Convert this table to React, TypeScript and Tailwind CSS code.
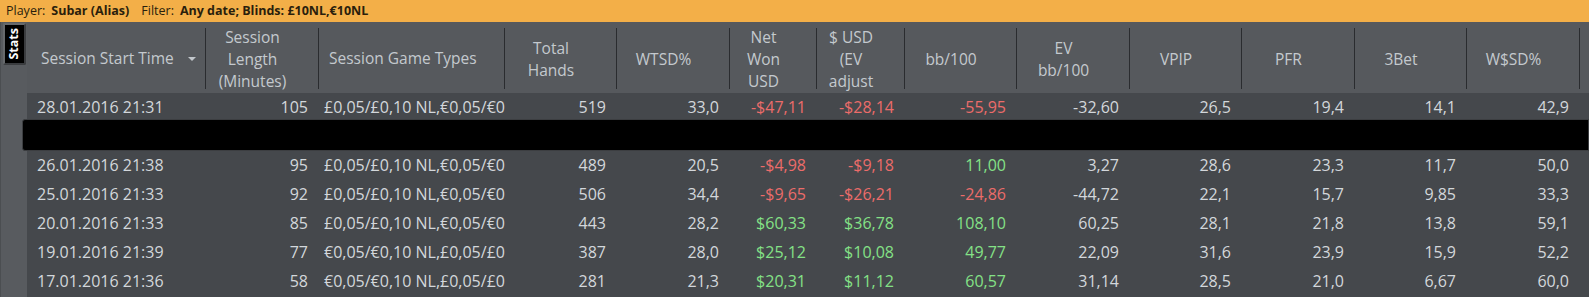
const cols = [179, 113, 186, 112, 113, 87, 88, 112, 113, 112, 113, 112, 113];
const grid = "grid grid-cols-[179px_113px_186px_112px_113px_87px_88px_112px_113px_112px_113px_112px_113px_1fr]";

const headers: string[][] = [
  ["Session Start Time"],
  ["Session", "Length", "(Minutes)"],
  ["Session Game Types"],
  ["Total", "Hands"],
  ["WTSD%"],
  ["Net", "Won", "USD"],
  ["$ USD", "(EV", "adjust"],
  ["bb/100"],
  ["EV", "bb/100"],
  ["VPIP"],
  ["PFR"],
  ["3Bet"],
  ["W$SD%"],
];

type Row = string[] | null;

const gbp = "£0,05/£0,10 NL,€0,05/€0";
const eur = "€0,05/€0,10 NL,£0,05/£0";

const rows: Row[] = [
  ["28.01.2016 21:31", "105", gbp, "519", "33,0", "-$47,11", "-$28,14", "-55,95", "-32,60", "26,5", "19,4", "14,1", "42,9"],
  null,
  ["26.01.2016 21:38", "95", gbp, "489", "20,5", "-$4,98", "-$9,18", "11,00", "3,27", "28,6", "23,3", "11,7", "50,0"],
  ["25.01.2016 21:33", "92", gbp, "506", "34,4", "-$9,65", "-$26,21", "-24,86", "-44,72", "22,1", "15,7", "9,85", "33,3"],
  ["20.01.2016 21:33", "85", gbp, "443", "28,2", "$60,33", "$36,78", "108,10", "60,25", "28,1", "21,8", "13,8", "59,1"],
  ["19.01.2016 21:39", "77", eur, "387", "28,0", "$25,12", "$10,08", "49,77", "22,09", "31,6", "23,9", "15,9", "52,2"],
  ["17.01.2016 21:36", "58", eur, "281", "21,3", "$20,31", "$11,12", "60,57", "31,14", "28,5", "21,0", "6,67", "60,0"],
];

// money + bb/100 columns get coloured by sign
const signed = [5, 6, 7];

function cellColor(i: number, v: string) {
  if (!signed.includes(i)) return "text-[#d3d7db]";
  return v.startsWith("-") ? "text-[#ec6c6a]" : "text-[#84e186]";
}

function HeaderCell({ idx, lines }: { idx: number; lines: string[] }) {
  const sep = <div className="w-px h-[61px] mt-[1px] bg-[#2a2c2f] shrink-0" />;
  if (idx === 0) {
    return (
      <div className="flex items-center h-full">
        <div className="flex-1 pl-[14px] pt-[3px] whitespace-nowrap">{lines[0]}</div>
        <div className="w-0 h-0 border-l-[4px] border-r-[4px] border-t-[4px] border-l-transparent border-r-transparent border-t-[#c2c7cc] mr-[9px] mt-[2px]" />
        {sep}
      </div>
    );
  }
  if (idx === 2) {
    return (
      <div className="flex items-center h-full">
        <div className="flex-1 pl-[10px] pt-[3px] whitespace-nowrap">{lines[0]}</div>
        {sep}
      </div>
    );
  }
  return (
    <div className="flex items-center h-full">
      <div className="flex-1 flex flex-col items-center pt-[3px] mr-[19px] leading-[22px]">
        {lines.map((l) => (
          <div key={l} className="whitespace-nowrap">{l}</div>
        ))}
      </div>
      {sep}
    </div>
  );
}

function DataRow({ row }: { row: Row }) {
  return (
    <div className={`${grid} h-[29px] items-center leading-[29px]`}>
      {cols.map((_, i) => {
        const v = row ? row[i] : "";
        if (i === 0) return <div key={i} className="pl-[10px] text-[#d3d7db] whitespace-nowrap">{v}</div>;
        if (i === 2)
          return (
            <div key={i} className="pl-[5px] text-[#d3d7db] whitespace-nowrap overflow-hidden">
              {v}
            </div>
          );
        return (
          <div key={i} className={`pr-[11px] text-right whitespace-nowrap ${cellColor(i, v)}`}>
            {v}
          </div>
        );
      })}
      <div />
    </div>
  );
}

export default function App() {
  return (
    <div className="relative w-full h-[297px] overflow-hidden bg-[#56595d] font-['Open_Sans',sans-serif]">
      <div className="h-[22px] flex items-center pl-[6px] bg-[#f3af48] text-[12.5px] text-[#2a1e0c] whitespace-nowrap">
        <span>Player:</span>
        <span className="font-bold ml-[6px]">Subar (Alias)</span>
        <span className="ml-[12px]">Filter:</span>
        <span className="font-bold ml-[6px]">Any date; Blinds: £10NL,€10NL</span>
      </div>

      <div className="flex h-[275px]">
        <div className="w-[27px] shrink-0 bg-[#585b5f] border-l border-[#4b4e51] pt-[1px]">
          <div className="ml-[2px] w-[23px] h-[42px] bg-black border-2 border-[#66696c] border-r-[#3a3c3f] border-b-[#3a3c3f] rounded-[2px] flex items-center justify-center">
            <span className="[writing-mode:vertical-rl] rotate-180 text-[12.5px] font-bold text-white leading-none">
              Stats
            </span>
          </div>
        </div>

        <div className="flex-1 flex flex-col">
          <div className={`${grid} h-[71px] bg-[#56595d] text-[#c4c9ce] text-[15.5px]`}>
            {headers.map((h, i) => (
              <HeaderCell key={i} idx={i} lines={h} />
            ))}
            <div />
          </div>
          <div className="flex-1 bg-[#45484c] text-[16px]">
            {rows.map((r, i) => (
              <DataRow key={i} row={r} />
            ))}
          </div>
        </div>
      </div>

      {/* redacted row */}
      <div className="absolute left-[22px] right-0 top-[119px] h-[32px] bg-black rounded-l-[3px] border border-[#3c3e41]" />
    </div>
  );
}
